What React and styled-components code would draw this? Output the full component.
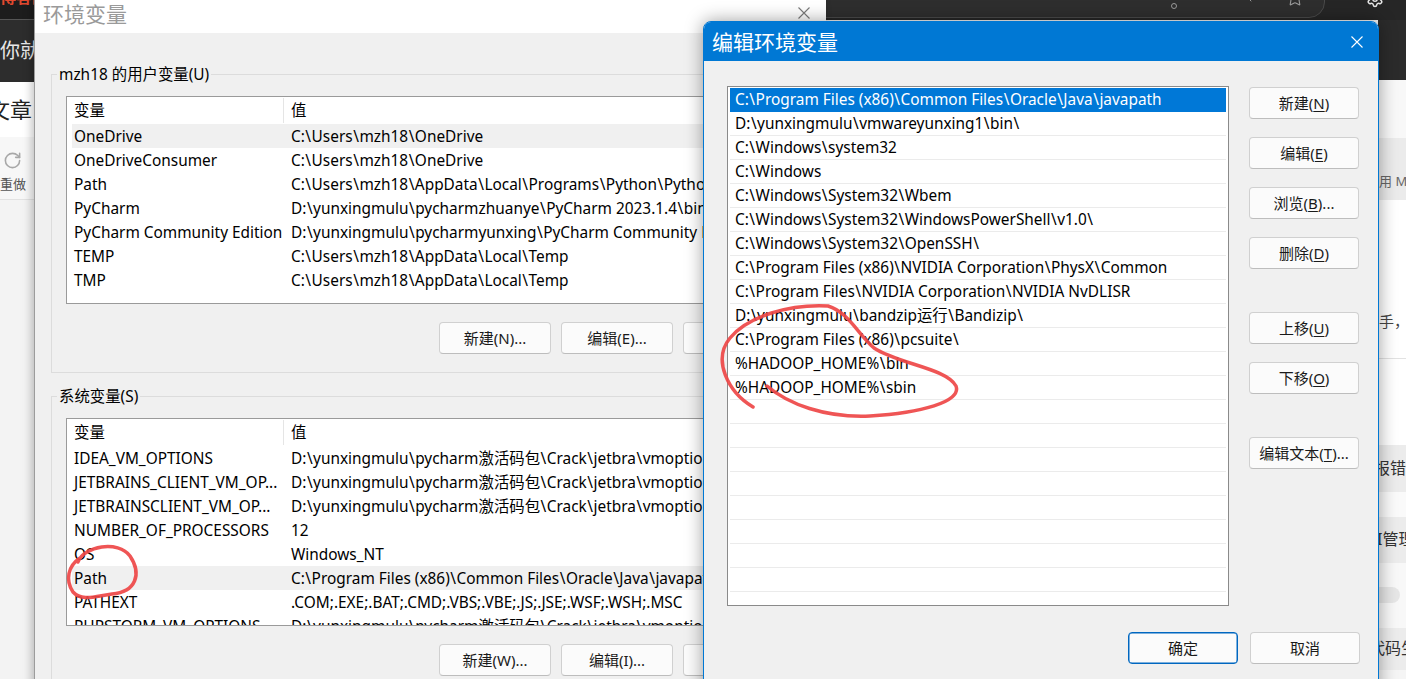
import React from "react";
import styled, { createGlobalStyle, css } from "styled-components";
import { RotateCw, Star, Settings, ChevronLeft } from "lucide-react";

const UI_FONT = `"Noto Sans", "Noto Sans CJK SC", sans-serif`;

const GlobalStyle = createGlobalStyle`
  html, body { margin: 0; padding: 0; }
  body {
    width: 1406px; height: 679px; overflow: hidden;
    font-family: ${UI_FONT};
    font-size: 15.4px;
    color: #000;
  }
  * { box-sizing: border-box; }
`;

const Desktop = styled.div`
  position: relative;
  width: 1406px;
  height: 679px;
  overflow: hidden;
  background: #f3f3f3;
`;

/* ---------- browser page behind the dialogs ---------- */
const Backdrop = styled.div`
  position: absolute;
  inset: 0;
  display: flex;
  flex-direction: column;
`;

const TopStrip = styled.div`
  height: 20px;
  flex-shrink: 0;
  display: flex;
  background: #262626;
  overflow: hidden;
`;

const TopLeftCell = styled.div`
  width: 34px;
  background: #1d1d1d;
  border-bottom: 1px solid #555;
  overflow: hidden;
  color: #e2492f;
  font-size: 16px;
  font-weight: 700;
  line-height: 16px;
  white-space: nowrap;
  span { display: block; margin-top: -11px; }
`;

const Omnibox = styled.div`
  margin-left: auto;
  width: 600px;
  height: 30px;
  margin-top: -12px;
  border: 1px solid #4a4a4a;
  border-radius: 0 0 16px 0;
  background: #2e2e2e;
  display: flex;
  align-items: center;
  justify-content: flex-end;
  gap: 29px;
  padding-right: 20px;
  color: #9a9a9a;
`;

const Dot = styled.span`
  width: 6px; height: 6px; border-radius: 50%;
  border: 1.5px solid #9a9a9a;
  margin-top: 6px;
  margin-right: 35px;
`;

const GearSlot = styled.div`
  width: 81px;
  display: flex;
  justify-content: flex-end;
  padding-right: 22px;
  color: #e6e6e6;
  svg { margin-top: -10px; }
`;

const PageRow = styled.div`
  flex: 1;
  display: flex;
  min-height: 0;
`;

const SidePane = styled.div`
  width: ${p => p.$w}px;
  flex-shrink: 0;
  display: flex;
  flex-direction: column;
  overflow: hidden;
`;

const PageMiddle = styled.div`
  flex: 1;
  background: #f3f3f3;
`;

const Band = styled.div`
  height: ${p => p.$h}px;
  flex-shrink: 0;
  background: ${p => p.$bg};
  color: ${p => p.$color || "#333"};
  font-size: ${p => p.$size || 15}px;
  display: flex;
  flex-direction: column;
  justify-content: ${p => p.$justify || "center"};
  padding-top: ${p => p.$top || 0}px;
  padding-left: ${p => p.$pad || 0}px;
  white-space: nowrap;
  overflow: hidden;
  ${p => p.$line && css`border-top: 1px solid #e2e2e2;`}
`;

const BandText = styled.span`
  margin-left: ${p => p.$shift || 0}px;
  line-height: 1.2;
`;

const Filler = styled.div`
  flex: 1;
  background: ${p => p.$bg};
  ${p => p.$line && css`border-top: 1px solid #e2e2e2;`}
`;

const Pill = styled.span`
  width: 22px; height: 16px; border-radius: 0 8px 8px 0;
  background: #e6e6e6;
  margin-top: 24px;
`;

/* ---------- classic Win dialog pieces ---------- */
const OldWindow = styled.section`
  position: absolute;
  left: 34px;
  top: 0;
  width: 792px;
  height: 700px;
  background: #f0f0f0;
  border-left: 1px solid #9c9c9c;
  box-shadow: -3px 0 8px rgba(0, 0, 0, 0.22);
  display: flex;
  flex-direction: column;
`;

const OldTitleBar = styled.header`
  height: 33px;
  background: #fff;
  display: flex;
  align-items: flex-start;
  padding: 3px 16px 0 8px;
`;

const OldTitle = styled.h1`
  margin: 0;
  font-weight: 400;
  font-size: 21px;
  line-height: 22px;
  color: #9a9a9a;
  flex: 1;
`;

const CloseBtn = styled.span`
  display: flex;
  margin-top: ${p => p.$mt || 0}px;
`;

const OldBody = styled.div`
  padding: 31px 15px 0 16px;
  display: flex;
  flex-direction: column;
  gap: 13px;
`;

const GroupBox = styled.fieldset`
  margin: 0;
  min-width: 0;
  border: 1px solid #dcdcdc;
  padding: 12px 15px 18px 5px;
`;

const GroupLegend = styled.legend`
  padding: 1px 2px 0;
  font-size: 15.4px;
  line-height: 19px;
  color: #000;
`;

const GroupContent = styled.div`
  padding-left: 9px;
  display: flex;
  flex-direction: column;
  gap: 18px;
`;

const ListView = styled.div`
  height: 208px;
  border: 1px solid #9a9a9a;
  background: #fff;
  overflow: hidden;
`;

const ListHeader = styled.div`
  display: grid;
  grid-template-columns: 217px 1fr;
  height: 27px;
  align-items: center;
`;

const HeaderCell = styled.div`
  padding-left: 7px;
  padding-top: 1px;
  line-height: 24px;
  ${p => p.$divider && css`border-right: 1px solid #e5e5e5;`}
`;

const VarRow = styled.div`
  display: grid;
  grid-template-columns: 212px 1fr;
  height: 24px;
  margin-left: 5px;
  align-items: start;
  background: ${p => (p.$active ? "#f0f0f0" : "transparent")};
`;

const VarCell = styled.div`
  padding-left: ${p => (p.$value ? 7 : 2)}px;
  padding-top: 1px;
  white-space: nowrap;
  overflow: hidden;
  line-height: 23px;
`;

const ButtonRow = styled.div`
  display: flex;
  justify-content: flex-end;
  gap: 10px;
`;

const DlgButton = styled.button`
  width: ${p => p.$w || 110}px;
  height: 32px;
  flex-shrink: 0;
  border: 1px solid #d0d0d0;
  border-bottom-color: #bdbdbd;
  border-radius: 4px;
  background: #fbfbfb;
  font-family: ${UI_FONT};
  font-size: 15px;
  color: #1a1a1a;
  padding: 0;
  line-height: 30px;
  ${p => p.$primary && css`
    border-color: #0067c0;
    box-shadow: inset 0 0 0 0.5px #0067c0;
  `}
  u { text-underline-offset: 2px; text-decoration-thickness: 1px; }
`;

/* ---------- edit env var dialog ---------- */
const EditWindow = styled.section`
  position: absolute;
  left: 703px;
  top: 21px;
  width: 676px;
  height: 690px;
  border: 1px solid #0078d4;
  border-radius: 8px 8px 0 0;
  background: #f0f0f0;
  box-shadow: 0 0 18px rgba(0, 0, 0, 0.38);
  overflow: hidden;
  display: flex;
  flex-direction: column;
`;

const EditTitleBar = styled.header`
  height: 39px;
  flex-shrink: 0;
  background: #0078d4;
  display: flex;
  align-items: center;
  padding: 0 15px 0 8px;
`;

const EditTitle = styled.h1`
  margin: 0;
  flex: 1;
  font-weight: 400;
  font-size: 21px;
  line-height: 24px;
  color: #fff;
`;

const EditBody = styled.div`
  padding: 25px 18px 0 23px;
  display: flex;
  flex-direction: column;
  gap: 26px;
`;

const EditMain = styled.div`
  display: flex;
  gap: 20px;
`;

const PathList = styled.div`
  width: 502px;
  height: 520px;
  flex-shrink: 0;
  border: 1px solid #8a8a8a;
  background: #fff;
  padding: 1px 1px 0 1px;
  overflow: hidden;
`;

const PathRow = styled.div`
  height: 24px;
  padding-top: 1px;
  line-height: 22px;
  padding-left: 5px;
  margin: 0 1px;
  border-bottom: 1px solid ${p => (p.$selected ? "#0078d7" : "#ebebeb")};
  background: ${p => (p.$selected ? "#0078d7" : "transparent")};
  color: ${p => (p.$selected ? "#fff" : "#000")};
  white-space: nowrap;
  overflow: hidden;
`;

/* backslashes are a little wider in the Windows UI font */
const Slash = styled.span`
  padding: 0 0.5px;
`;

const SideButtons = styled.div`
  display: flex;
  flex-direction: column;
  gap: 43px;
  padding-top: 1px;
`;

const ButtonStack = styled.div`
  display: flex;
  flex-direction: column;
  gap: 18px;
`;

const Footer = styled.div`
  display: flex;
  justify-content: flex-end;
  gap: 12px;
`;

const Annotation = styled.svg`
  position: absolute;
  left: 0;
  top: 0;
  width: 1406px;
  height: 679px;
  pointer-events: none;
`;

/* ---------- data ---------- */
const userVars = [
  ["OneDrive", "C:\\Users\\mzh18\\OneDrive", true],
  ["OneDriveConsumer", "C:\\Users\\mzh18\\OneDrive"],
  ["Path", "C:\\Users\\mzh18\\AppData\\Local\\Programs\\Python\\Python311\\Scripts\\;"],
  ["PyCharm", "D:\\yunxingmulu\\pycharmzhuanye\\PyCharm 2023.1.4\\bin;"],
  ["PyCharm Community Edition", "D:\\yunxingmulu\\pycharmyunxing\\PyCharm Community Edition 2023.1.4\\bin;"],
  ["TEMP", "C:\\Users\\mzh18\\AppData\\Local\\Temp"],
  ["TMP", "C:\\Users\\mzh18\\AppData\\Local\\Temp"],
];

const sysVars = [
  ["IDEA_VM_OPTIONS", "D:\\yunxingmulu\\pycharm激活码包\\Crack\\jetbra\\vmoptions\\idea.vmoptions"],
  ["JETBRAINS_CLIENT_VM_OP...", "D:\\yunxingmulu\\pycharm激活码包\\Crack\\jetbra\\vmoptions\\jetbrains_client.vmoptions"],
  ["JETBRAINSCLIENT_VM_OP...", "D:\\yunxingmulu\\pycharm激活码包\\Crack\\jetbra\\vmoptions\\jetbrainsclient.vmoptions"],
  ["NUMBER_OF_PROCESSORS", "12"],
  ["OS", "Windows_NT"],
  ["Path", "C:\\Program Files (x86)\\Common Files\\Oracle\\Java\\javapath;", true],
  ["PATHEXT", ".COM;.EXE;.BAT;.CMD;.VBS;.VBE;.JS;.JSE;.WSF;.WSH;.MSC"],
  ["PHPSTORM_VM_OPTIONS", "D:\\yunxingmulu\\pycharm激活码包\\Crack\\jetbra\\vmoptions\\phpstorm.vmoptions"],
];

const paths = [
  "C:\\Program Files (x86)\\Common Files\\Oracle\\Java\\javapath",
  "D:\\yunxingmulu\\vmwareyunxing1\\bin\\",
  "C:\\Windows\\system32",
  "C:\\Windows",
  "C:\\Windows\\System32\\Wbem",
  "C:\\Windows\\System32\\WindowsPowerShell\\v1.0\\",
  "C:\\Windows\\System32\\OpenSSH\\",
  "C:\\Program Files (x86)\\NVIDIA Corporation\\PhysX\\Common",
  "C:\\Program Files\\NVIDIA Corporation\\NVIDIA NvDLISR",
  "D:\\yunxingmulu\\bandzip运行\\Bandizip\\",
  "C:\\Program Files (x86)\\pcsuite\\",
  "%HADOOP_HOME%\\bin",
  "%HADOOP_HOME%\\sbin",
];
const pathRows = [...paths, ...Array(8).fill("")];

const PathText = ({ text }) =>
  text.split("\\").map((part, i) => (
    <React.Fragment key={i}>
      {i > 0 && <Slash>{"\\"}</Slash>}
      {part}
    </React.Fragment>
  ));

const XGlyph = ({ color }) => (
  <svg width="12" height="12" viewBox="0 0 12 12">
    <path d="M0.5 0.5 L11.5 11.5 M11.5 0.5 L0.5 11.5" stroke={color} strokeWidth="1.1" fill="none" />
  </svg>
);

const VarList = ({ rows }) => (
  <ListView>
    <ListHeader>
      <HeaderCell $divider>变量</HeaderCell>
      <HeaderCell>值</HeaderCell>
    </ListHeader>
    {rows.map(([name, value, active], i) => (
      <VarRow key={i} $active={active}>
        <VarCell>{name}</VarCell>
        <VarCell $value><PathText text={value} /></VarCell>
      </VarRow>
    ))}
  </ListView>
);

export default function App() {
  return (
    <>
      <GlobalStyle />
      <Desktop>
        <Backdrop>
          <TopStrip>
            <TopLeftCell><span>博客园</span></TopLeftCell>
            <Omnibox>
              <Dot />
              <ChevronLeft size={16} strokeWidth={1.5} style={{ marginTop: -12 }} />
              <Star size={18} strokeWidth={1.5} style={{ marginTop: -10 }} />
            </Omnibox>
            <GearSlot><Settings size={18} strokeWidth={2} /></GearSlot>
          </TopStrip>
          <PageRow>
            <SidePane $w={34}>
              <Band $h={62} $bg="#2d2d2d" $color="#e8e8e8" $size={20}>
                <BandText>你就</BandText>
              </Band>
              <Band $h={55} $bg="#ffffff" $color="#222" $size={22}>
                <BandText $shift={-12}>文章</BandText>
              </Band>
              <Band $h={62} $bg="#f7f7f7" $color="#555" $size={13} $justify="flex-start" $top={14}>
                <RotateCw size={19} color="#a8a8a8" strokeWidth={2} style={{ marginLeft: 3 }} />
                <BandText style={{ marginTop: 7 }}>重做</BandText>
              </Band>
              <Filler $bg="#f3f3f3" $line />
            </SidePane>
            <PageMiddle />
            <SidePane $w={28}>
              <Band $h={60} $bg="#2b2b2b" />
              <Band $h={58} $bg="#f8f8f8" />
              <Band $h={62} $bg="#ebebeb" $color="#666" $size={13} $justify="flex-end" $pad={1}>
                <BandText style={{ marginBottom: 10 }}>用 M</BandText>
              </Band>
              <Band $h={158} $bg="#ffffff" $color="#444" $justify="flex-start" $top={112} $pad={1}>
                <BandText>手，</BandText>
              </Band>
              <Band $h={87} $bg="#ffffff" $line />
              <Band $h={47} $bg="#ececec" $color="#333" $size={16}>
                <BandText $shift={-4}>报错</BandText>
              </Band>
              <Band $h={25} $bg="#fafafa" />
              <Band $h={46} $bg="#ececec" $color="#333" $size={16}>
                <BandText $shift={-1}>I管理</BandText>
              </Band>
              <Band $h={65} $bg="#f8f8f8" $justify="flex-start">
                <Pill />
              </Band>
              <Band $h={42} $bg="#ececec" $color="#333" $size={16}>
                <BandText $shift={-9}>代码生</BandText>
              </Band>
              <Filler $bg="#f5f5f5" />
            </SidePane>
          </PageRow>
        </Backdrop>

        <OldWindow>
          <OldTitleBar>
            <OldTitle>环境变量</OldTitle>
            <CloseBtn $mt={4}><XGlyph color="#7a7a7a" /></CloseBtn>
          </OldTitleBar>
          <OldBody>
            <GroupBox>
              <GroupLegend>mzh18 的用户变量(U)</GroupLegend>
              <GroupContent>
                <VarList rows={userVars} />
                <ButtonRow>
                  <DlgButton $w={112}>新建(N)...</DlgButton>
                  <DlgButton $w={112}>编辑(E)...</DlgButton>
                  <DlgButton $w={112}>删除(D)</DlgButton>
                </ButtonRow>
              </GroupContent>
            </GroupBox>
            <GroupBox>
              <GroupLegend>系统变量(S)</GroupLegend>
              <GroupContent>
                <VarList rows={sysVars} />
                <ButtonRow>
                  <DlgButton $w={112}>新建(W)...</DlgButton>
                  <DlgButton $w={112}>编辑(I)...</DlgButton>
                  <DlgButton $w={112}>删除(L)</DlgButton>
                </ButtonRow>
              </GroupContent>
            </GroupBox>
          </OldBody>
        </OldWindow>

        <EditWindow>
          <EditTitleBar>
            <EditTitle>编辑环境变量</EditTitle>
            <CloseBtn><XGlyph color="#ffffff" /></CloseBtn>
          </EditTitleBar>
          <EditBody>
            <EditMain>
              <PathList>
                {pathRows.map((p, i) => (
                  <PathRow key={i} $selected={i === 0}><PathText text={p} /></PathRow>
                ))}
              </PathList>
              <SideButtons>
                <ButtonStack>
                  <DlgButton>新建(<u>N</u>)</DlgButton>
                  <DlgButton>编辑(<u>E</u>)</DlgButton>
                  <DlgButton>浏览(<u>B</u>)...</DlgButton>
                  <DlgButton>删除(<u>D</u>)</DlgButton>
                </ButtonStack>
                <ButtonStack>
                  <DlgButton>上移(<u>U</u>)</DlgButton>
                  <DlgButton>下移(<u>O</u>)</DlgButton>
                </ButtonStack>
                <ButtonStack>
                  <DlgButton>编辑文本(<u>T</u>)...</DlgButton>
                </ButtonStack>
              </SideButtons>
            </EditMain>
            <Footer>
              <DlgButton $primary>确定</DlgButton>
              <DlgButton>取消</DlgButton>
            </Footer>
          </EditBody>
        </EditWindow>

        <Annotation viewBox="0 0 1406 679">
          <g fill="none" stroke="#ee4646" strokeWidth="3.5" strokeLinecap="round" strokeLinejoin="round" opacity="0.92">
            <path d="M753 407 C728 392, 712 360, 730 338 C748 316, 790 304, 828 306 C848 312, 858 334, 874 348 C898 364, 946 368, 956 386 C962 402, 920 413, 870 416 C825 418, 788 404, 767 386" />
            <path d="M78 562 C84 546, 118 540, 130 556 C142 574, 136 592, 112 594 C96 596, 82 602, 73 592 C65 580, 68 566, 80 558" />
          </g>
        </Annotation>
      </Desktop>
    </>
  );
}
